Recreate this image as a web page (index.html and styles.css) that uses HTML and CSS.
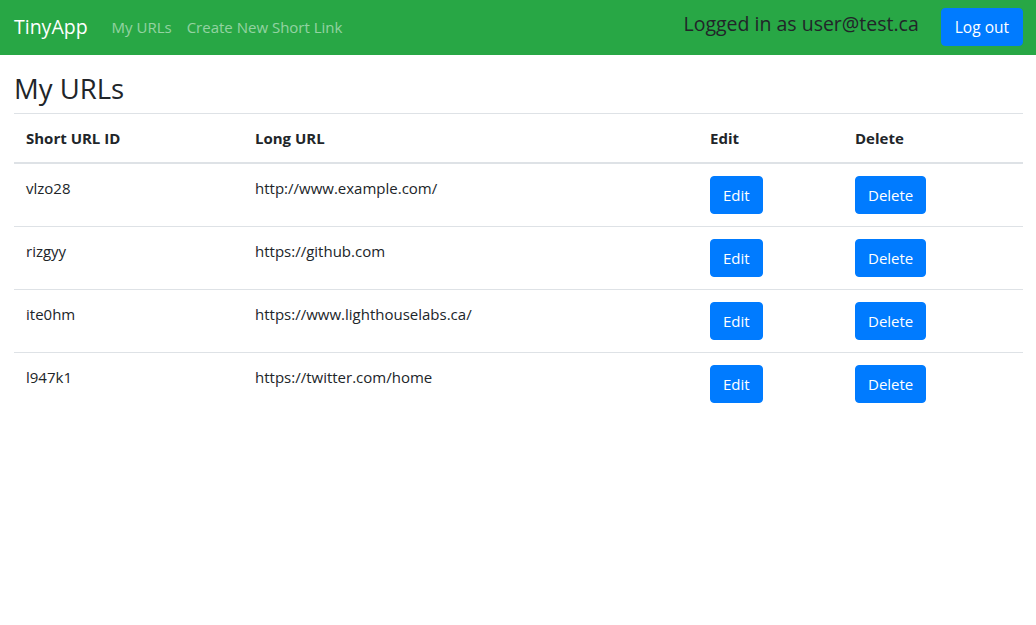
FILE: index.html
```html
<!DOCTYPE html>
<html lang="en">
<head>
<meta charset="utf-8">
<title>TinyApp</title>
<link rel="stylesheet" href="styles.css">
</head>
<body>
<nav class="navbar">
  <div class="nav-left">
    <a class="brand" href="#">TinyApp</a>
    <a class="nav-link" href="#">My URLs</a>
    <a class="nav-link" href="#">Create New Short Link</a>
  </div>
  <div class="nav-right">
    <span class="logged">Logged in as user@test.ca</span>
    <button class="btn btn-nav">Log out</button>
  </div>
</nav>
<main class="main">
  <h3 class="title">My URLs</h3>
  <table class="table">
    <thead>
      <tr>
        <th class="c1">Short URL ID</th>
        <th class="c2">Long URL</th>
        <th class="c3">Edit</th>
        <th class="c4">Delete</th>
      </tr>
    </thead>
    <tbody>
      <tr>
        <td>vlzo28</td>
        <td>http://www.example.com/</td>
        <td><button class="btn">Edit</button></td>
        <td><button class="btn">Delete</button></td>
      </tr>
      <tr>
        <td>rizgyy</td>
        <td>https://github.com</td>
        <td><button class="btn">Edit</button></td>
        <td><button class="btn">Delete</button></td>
      </tr>
      <tr>
        <td>ite0hm</td>
        <td>https://www.lighthouselabs.ca/</td>
        <td><button class="btn">Edit</button></td>
        <td><button class="btn">Delete</button></td>
      </tr>
      <tr>
        <td>l947k1</td>
        <td>https://twitter.com/home</td>
        <td><button class="btn">Edit</button></td>
        <td><button class="btn">Delete</button></td>
      </tr>
    </tbody>
  </table>
</main>
</body>
</html>
```
FILE: styles.css
```css
* { box-sizing: border-box; }
body {
  margin: 0;
  font-family: "Open Sans", "Noto Sans", sans-serif;
  font-size: 15px;
  line-height: 24px;
  color: #212529;
  background: #fff;
}
.navbar {
  height: 55px;
  background: #28a745;
  display: flex;
  align-items: center;
  justify-content: space-between;
  padding: 0 13px 0 14px;
}
.nav-left { display: flex; align-items: center; margin-bottom: 1px; }
.brand {
  color: #fff;
  font-size: 19.5px;
  text-decoration: none;
  margin-right: 24px;
}
.nav-link {
  color: rgba(255,255,255,0.5);
  font-size: 15px;
  text-decoration: none;
  margin-right: 15px;
}
.nav-right { display: flex; align-items: center; }
.logged {
  font-size: 19.5px;
  font-weight: 500;
  color: #212529;
  margin-right: 22px;
  margin-bottom: 7px;
}
.btn {
  font-family: inherit;
  font-size: 15px;
  line-height: 24px;
  color: #fff;
  background: #007bff;
  border: 1px solid #007bff;
  border-radius: 4px;
  padding: 6px 12px;
  height: 38px;
  cursor: pointer;
}
.btn-nav {
  font-size: 15.5px;
  padding: 6px 13px;
  margin-bottom: 2px;
}
.main { padding: 0 13px 0 14px; }
.title {
  font-size: 27.5px;
  font-weight: 500;
  line-height: 1.2;
  margin: 17px 0 8px;
}
.table {
  width: 100%;
  border-collapse: collapse;
}
.table th, .table td {
  padding: 12px;
  text-align: left;
  vertical-align: top;
  border-top: 1px solid #dee2e6;
}
.table thead th {
  font-weight: 700;
  border-bottom: 2px solid #dee2e6;
  vertical-align: bottom;
}
.c1 { width: 229px; }
.c2 { width: 455px; }
.c3 { width: 145px; }
.c4 { width: 180px; }
```
